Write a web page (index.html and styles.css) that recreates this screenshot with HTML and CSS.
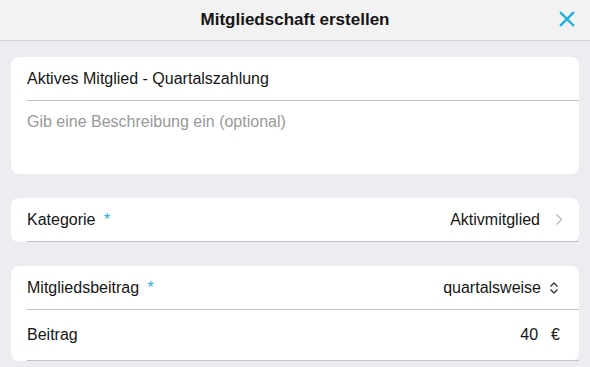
FILE: index.html
```html
<!DOCTYPE html>
<html>
<head>
  <meta charset="utf-8" />
  <title>Mitgliedschaft erstellen</title>
  <link rel="stylesheet" href="styles.css">
</head>
<body>
  <!-- Header -->
  <header class="topbar">
    <h1 class="title">Mitgliedschaft erstellen</h1>
    <button class="close" aria-label="Schließen">
      <svg width="16" height="16" viewBox="0 0 16 16">
        <path d="M2 2 L14 14 M14 2 L2 14" stroke="#1aafe0" stroke-width="2.4" stroke-linecap="square" fill="none"/>
      </svg>
    </button>
  </header>

  <main class="content">
    <!-- Name + description -->
    <section class="card">
      <div class="row row-name">Aktives Mitglied - Quartalszahlung</div>
      <div class="row row-desc">Gib eine Beschreibung ein (optional)</div>
    </section>

    <!-- Category -->
    <section class="card">
      <div class="row row-line">
        <span class="label">Kategorie <span class="req">*</span></span>
        <span class="value">Aktivmitglied
          <svg class="chev" width="8" height="13" viewBox="0 0 8 13">
            <path d="M1.5 1.5 L6.5 6.5 L1.5 11.5" stroke="#b8b8b8" stroke-width="1.4" fill="none"/>
          </svg>
        </span>
      </div>
    </section>

    <!-- Fee -->
    <section class="card">
      <div class="row row-line">
        <span class="label">Mitgliedsbeitrag <span class="req">*</span></span>
        <span class="value">quartalsweise
          <svg class="updown" width="10" height="14" viewBox="0 0 10 14">
            <path d="M1.5 5.5 L5 2 L8.5 5.5 M1.5 8.5 L5 12 L8.5 8.5" stroke="#333" stroke-width="1.3" fill="none"/>
          </svg>
        </span>
      </div>
      <div class="row row-line row-tall">
        <span class="label">Beitrag</span>
        <span class="value">40 <span class="currency">€</span></span>
      </div>
    </section>
  </main>
</body>
</html>
```

FILE: styles.css
```css
body {
  margin: 0;
  background: #ebedf1;
  font-family: "Liberation Sans", Arial, sans-serif;
  color: #161616;
  overflow: hidden;
}
.topbar {
  height: 40px;
  background: #f2f2f2;
  border-bottom: 1px solid #d2d2d2;
  display: flex;
  align-items: center;
  justify-content: center;
  position: relative;
}
.title {
  margin: 0;
  font-size: 17px;
  font-weight: bold;
}
.close {
  position: absolute;
  right: 14px;
  top: 10px;
  border: 0;
  background: none;
  padding: 0;
  width: 18px;
  height: 18px;
  display: flex;
  align-items: center;
  justify-content: center;
}
.content {
  padding: 16px 11px 0;
  display: flex;
  flex-direction: column;
  gap: 24px;
}
.card {
  background: #fff;
  border-radius: 8px;
}
.row {
  margin-left: 16px;
  font-size: 16px;
}
.row-name {
  height: 43px;
  line-height: 43px;
  border-bottom: 1px solid #c3c3c3;
}
.row-desc {
  color: #999;
  padding-top: 12px;
  height: 61px;
}
.row-line {
  height: 43px;
  display: flex;
  align-items: center;
  justify-content: space-between;
  border-bottom: 1px solid #c3c3c3;
  padding-right: 16px;
}
.row-tall {
  height: 50px;
}
.req {
  color: #1aafe0;
  margin-left: 4px;
}
.value {
  display: flex;
  align-items: center;
}
.chev {
  margin-left: 15px;
}
.updown {
  margin-left: 8px;
  margin-right: 4px;
}
.currency {
  margin-left: 13px;
  margin-right: 3px;
}
```
